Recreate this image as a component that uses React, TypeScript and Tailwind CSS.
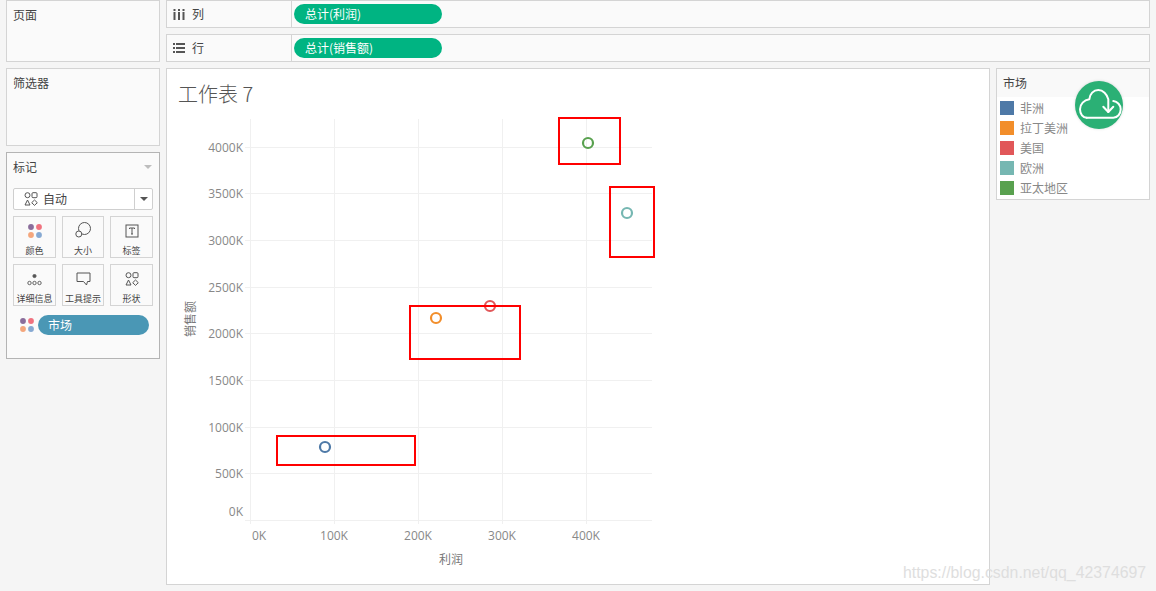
import type { ReactNode } from 'react';

const CJK = "font-['Noto_Sans_CJK_SC','Noto_Sans',sans-serif]";

const legend = [
  { name: '非洲', color: '#4e79a7' },
  { name: '拉丁美洲', color: '#f28e2b' },
  { name: '美国', color: '#e15759' },
  { name: '欧洲', color: '#76b7b2' },
  { name: '亚太地区', color: '#59a14f' },
];

const gridX = [250, 334, 418, 502, 586];
const yTicks = [
  { label: '4000K', y: 147 },
  { label: '3500K', y: 193 },
  { label: '3000K', y: 240 },
  { label: '2500K', y: 287 },
  { label: '2000K', y: 333 },
  { label: '1500K', y: 380 },
  { label: '1000K', y: 427 },
  { label: '500K', y: 473 },
];
const points = [
  { x: 325, y: 447, color: '#4e79a7' },
  { x: 436, y: 318, color: '#f28e2b' },
  { x: 490, y: 306, color: '#e15759' },
  { x: 588, y: 143, color: '#59a14f' },
  { x: 627, y: 213, color: '#76b7b2' },
];
const boxes = [
  { x: 277, y: 436, w: 138, h: 29 },
  { x: 410, y: 306, w: 110, h: 53 },
  { x: 559, y: 118, w: 61, h: 46 },
  { x: 610, y: 187, w: 44, h: 70 },
];

function ShapesIcon() {
  return (
    <svg width="14" height="14" viewBox="0 0 14 14" fill="none" stroke="#555" strokeWidth="1">
      <circle cx="3.5" cy="3.2" r="2.5" />
      <rect x="8" y="0.7" width="5" height="5" rx="1" />
      <path d="M3.5 8 L6 13 L1 13 Z" />
      <path d="M10.5 8 L13.3 10.7 L10.5 13.4 L7.7 10.7 Z" />
    </svg>
  );
}

function ColorDots() {
  return (
    <svg width="14" height="14" viewBox="0 0 14 14">
      <circle cx="3" cy="3" r="2.9" fill="#8a6d9b" />
      <circle cx="11" cy="3" r="2.9" fill="#f0727f" />
      <circle cx="3" cy="11" r="2.9" fill="#f4a67c" />
      <circle cx="11" cy="11" r="2.9" fill="#86a9d2" />
    </svg>
  );
}

function MarkTile({ label, icon }: { label: string; icon: ReactNode }) {
  return (
    <div className="flex h-[42px] flex-col items-center border border-[#d4d4d4] bg-[#fafafa]">
      <div className="flex h-[21px] items-end justify-center">{icon}</div>
      <span className="mt-[7px] text-[9px] leading-[11px] whitespace-nowrap text-[#444]">{label}</span>
    </div>
  );
}

function ShelfRow({ icon, label, pill }: { icon: ReactNode; label: string; pill: string }) {
  return (
    <div className="flex h-[28px] border border-[#d4d4d4] bg-[#fafafa]">
      <div className="flex w-[125px] items-center border-r border-[#d4d4d4] pl-[6px]">
        <div className="flex w-[19px] justify-start">{icon}</div>
        <span className="text-xs text-[#444]">{label}</span>
      </div>
      <div className="flex items-center pl-[2px]">
        <div className="flex h-[20px] w-[148px] items-center rounded-full bg-[#00b482] pl-[11px] text-xs text-white">
          {pill}
        </div>
      </div>
    </div>
  );
}

export default function App() {
  return (
    <div className={`relative flex h-[591px] w-[1156px] gap-[6px] overflow-hidden bg-[#f5f5f5] pl-[6px] ${CJK}`}>
      <div className="flex w-[154px] flex-col gap-[6px]">
        <div className="h-[62px] border border-[#d4d4d4] bg-[#fafafa] px-[6px] pt-[6px] text-xs leading-[16px] text-[#444]">页面</div>
        <div className="h-[78px] border border-[#d4d4d4] bg-[#fafafa] px-[6px] pt-[6px] text-xs leading-[16px] text-[#444]">筛选器</div>
        <div className="h-[207px] border border-[#b4b4b4] bg-[#fafafa] px-[6px] pt-[5px]">
          <div className="flex h-[18px] items-center justify-between text-xs text-[#444]">
            <span>标记</span>
            <span className="mr-[1px] h-0 w-0 border-x-[4px] border-t-[4px] border-x-transparent border-t-[#bdbdbd]" />
          </div>
          <div className="mt-[12px] flex h-[22px] items-center rounded-[2px] border border-[#cfcfcf] bg-white">
            <div className="flex flex-1 items-center pl-[10px]">
              <ShapesIcon />
              <span className="ml-[5px] text-xs text-[#444]">自动</span>
            </div>
            <div className="flex h-full w-[18px] items-center justify-center border-l border-[#cfcfcf]">
              <span className="h-0 w-0 border-x-[4px] border-t-[4px] border-x-transparent border-t-[#555]" />
            </div>
          </div>
          <div className="mt-[6px] grid grid-cols-[43px_42px_43px] gap-x-[6px] gap-y-[6px]">
            <MarkTile label="颜色" icon={<ColorDots />} />
            <MarkTile
              label="大小"
              icon={
                <svg width="16" height="16" viewBox="0 0 16 16" fill="none" stroke="#555" strokeWidth="1">
                  <circle cx="9.5" cy="6.5" r="6" />
                  <circle cx="3.8" cy="12" r="3" fill="#fafafa" />
                </svg>
              }
            />
            <MarkTile
              label="标签"
              icon={
                <svg width="14" height="14" viewBox="0 0 14 14" fill="none" stroke="#555" strokeWidth="1">
                  <rect x="1" y="1" width="12" height="12" />
                  <path d="M4.5 5 V4 H9.5 V5 M7 4 V10 M6 10 H8" />
                </svg>
              }
            />
            <MarkTile
              label="详细信息"
              icon={
                <svg width="15" height="12" viewBox="0 0 15 12" fill="none" stroke="#555" strokeWidth="0.9">
                  <circle cx="7.5" cy="2" r="1.6" fill="#555" />
                  <circle cx="2.5" cy="9" r="1.7" />
                  <circle cx="7.5" cy="9" r="1.7" />
                  <circle cx="12.5" cy="9" r="1.7" />
                </svg>
              }
            />
            <MarkTile
              label="工具提示"
              icon={
                <svg width="15" height="14" viewBox="0 0 15 14" fill="none" stroke="#555" strokeWidth="1">
                  <path d="M1 1 H14 V9.5 H11.5 L10.5 13 L7.5 9.5 H1 Z" />
                </svg>
              }
            />
            <MarkTile label="形状" icon={<ShapesIcon />} />
          </div>
          <div className="mt-[9px] flex items-center">
            <div className="ml-[7px] flex w-[18px] items-center">
              <ColorDots />
            </div>
            <div className="flex h-[20px] w-[111px] items-center rounded-full bg-[#4a97b5] pl-[10px] text-xs text-white">市场</div>
          </div>
        </div>
      </div>

      <div className="flex w-[984px] flex-col gap-[6px]">
        <ShelfRow
          label="列"
          pill="总计(利润)"
          icon={
            <svg width="12" height="11" viewBox="0 0 12 11" fill="#555">
              <rect x="0.5" y="0" width="2" height="2" />
              <rect x="0.5" y="3" width="2" height="8" />
              <rect x="5" y="0" width="2" height="2" />
              <rect x="5" y="3" width="2" height="8" />
              <rect x="9.5" y="0" width="2" height="2" />
              <rect x="9.5" y="3" width="2" height="8" />
            </svg>
          }
        />
        <ShelfRow
          label="行"
          pill="总计(销售额)"
          icon={
            <svg width="12" height="10" viewBox="0 0 12 10" fill="#555">
              <rect x="0" y="0" width="2" height="2" />
              <rect x="3" y="0" width="9" height="2" />
              <rect x="0" y="4" width="2" height="2" />
              <rect x="3" y="4" width="9" height="2" />
              <rect x="0" y="8" width="2" height="2" />
              <rect x="3" y="8" width="9" height="2" />
            </svg>
          }
        />
        <div className="flex gap-[6px]">
          <div className="flex h-[517px] w-[824px] flex-col border border-[#d4d4d4] bg-white">
            <div className="h-[50px] pl-[11px] pt-[9px] text-xl leading-[32px] font-light text-[#555]">工作表 7</div>
            <svg width="822" height="465" viewBox="167 119 822 465" className="block overflow-visible">
              {gridX.map((x) => (
                <line key={x} x1={x + 0.5} x2={x + 0.5} y1={119} y2={524} stroke="#f0f0f0" />
              ))}
              {yTicks.map((t) => (
                <line key={t.label} x1={245} x2={652} y1={t.y + 0.5} y2={t.y + 0.5} stroke="#f0f0f0" />
              ))}
              <line x1={245} x2={652} y1={520.5} y2={520.5} stroke="#f0f0f0" />
              <g fontFamily="'Open Sans',sans-serif" fontSize="12" fill="#888">
                {yTicks.map((t) => (
                  <text key={t.label} x={243} y={t.y + 4.5} textAnchor="end">{t.label}</text>
                ))}
                <text x={243} y={516} textAnchor="end">0K</text>
                <text x={252} y={539.5}>0K</text>
                <text x={334} y={539.5} textAnchor="middle">100K</text>
                <text x={418} y={539.5} textAnchor="middle">200K</text>
                <text x={502} y={539.5} textAnchor="middle">300K</text>
                <text x={586} y={539.5} textAnchor="middle">400K</text>
              </g>
              <g fontFamily="'Noto Sans CJK SC',sans-serif" fontSize="12" fill="#787878">
                <text x={451} y={564} textAnchor="middle">利润</text>
                <text x={195} y={319} textAnchor="middle" transform="rotate(-90 195 319)">销售额</text>
              </g>
              {points.map((p) => (
                <circle key={p.x} cx={p.x} cy={p.y} r={5} fill="none" stroke={p.color} strokeWidth={2.2} />
              ))}
              {boxes.map((b) => (
                <rect key={b.x} x={b.x} y={b.y} width={b.w} height={b.h} fill="none" stroke="#ff0000" strokeWidth={2} />
              ))}
            </svg>
          </div>

          <div className="h-[132px] w-[154px] border border-[#d4d4d4] bg-white">
            <div className="h-[28px] bg-[#f9f9f9] pl-[6px] pt-[5px] text-xs leading-[17px] text-[#444]">市场</div>
            <div className="flex flex-col gap-[6px] pl-[3px] pt-[4px]">
              {legend.map((item) => (
                <div key={item.name} className="flex h-[14px] items-center gap-[6px]">
                  <span className="h-[14px] w-[14px]" style={{ backgroundColor: item.color }} />
                  <span className="text-xs text-[#888]">{item.name}</span>
                </div>
              ))}
            </div>
          </div>
        </div>
      </div>

      <div className="absolute left-[1075px] top-[81px] h-[48px] w-[48px] rounded-full bg-[#2bb075] shadow-[0_0_3px_rgba(0,0,0,0.15)]">
        <svg width="48" height="48" viewBox="0 0 48 48" fill="none" stroke="#fff" strokeWidth="2" strokeLinecap="round" strokeLinejoin="round">
          <path d="M11.7 36.7 H38.3 C42.5 36.7 45.7 33 45.7 28.3 C45.7 24 42.5 20.5 38.3 20" />
          <path d="M33.3 31 V18.3 C32 13 28 9 23.3 9 C18.5 9 14.8 13 14.3 18.3 C9 19 5 23 5 28.3 C5 33 8 36.7 11.7 36.7" />
          <path d="M28.3 25.7 L33.3 31 L38.3 25.7" />
        </svg>
      </div>
      <div className="absolute left-[903px] top-[564px] font-['Liberation_Sans',sans-serif] text-[15.85px] leading-[18px] whitespace-nowrap text-[#dedede]">
        https://blog.csdn.net/qq_42374697
      </div>
    </div>
  );
}
